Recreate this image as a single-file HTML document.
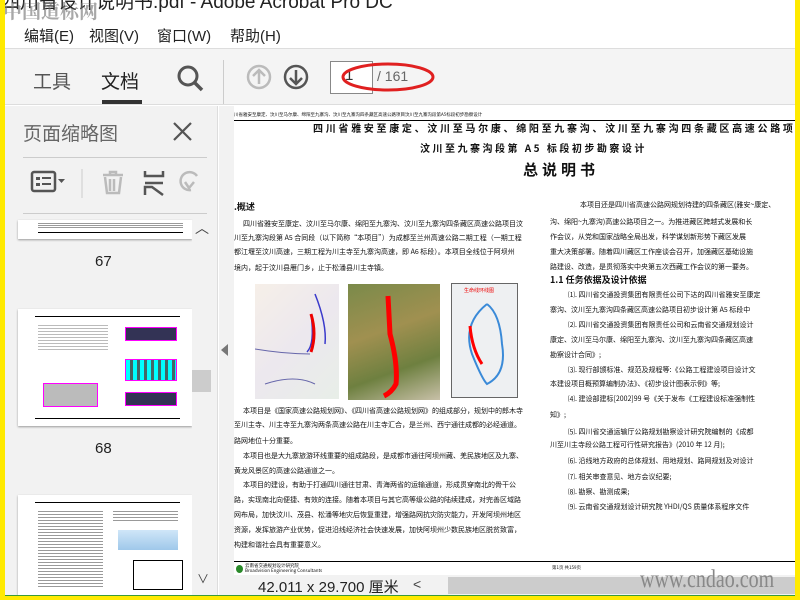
<!DOCTYPE html>
<html><head><meta charset="utf-8"><style>
*{margin:0;padding:0;box-sizing:border-box}
body{width:800px;height:600px;overflow:hidden;background:#ffea00;font-family:"Liberation Sans","Noto Sans CJK SC",sans-serif;position:relative}
.a{position:absolute}
.nw{white-space:nowrap}
.t{position:absolute;white-space:nowrap;font-size:7px;line-height:10px;color:#111;font-family:"Noto Sans CJK SC",sans-serif}
.h{font-family:"Noto Sans CJK SC",sans-serif;font-weight:bold;color:#111}
</style></head><body>
<div class="a" style="left:5px;top:0;width:790px;height:595px;background:#fff;overflow:hidden">
 <div class="a nw" style="left:-4px;top:-13px;font-size:19px;color:#222">四川省设计说明书.pdf - Adobe Acrobat Pro DC</div>
 <div class="a nw" style="left:-2px;top:-3px;font-size:19px;font-weight:bold;color:rgba(110,110,110,.6);font-family:'Noto Serif CJK SC',serif">中国道标网</div>
 <div class="a nw" style="left:19px;top:25px;font-size:15px;color:#222">编辑(E)</div>
 <div class="a nw" style="left:84px;top:25px;font-size:15px;color:#222">视图(V)</div>
 <div class="a nw" style="left:152px;top:25px;font-size:15px;color:#222">窗口(W)</div>
 <div class="a nw" style="left:225px;top:25px;font-size:15px;color:#222">帮助(H)</div>
 <div class="a" style="left:0;top:48px;width:790px;height:57px;background:#f4f4f4;border-top:1px solid #ddd;border-bottom:1px solid #ddd"></div>
 <div class="a nw" style="left:28px;top:67px;font-size:19px;color:#555">工具</div>
 <div class="a nw" style="left:96px;top:67px;font-size:19px;color:#222">文档</div>
 <div class="a" style="left:97px;top:100px;width:40px;height:4px;background:#333"></div>
 <svg class="a" style="left:170px;top:64px" width="34" height="30"><circle cx="13" cy="12" r="9" fill="none" stroke="#555" stroke-width="3"/><line x1="20" y1="19" x2="27" y2="26" stroke="#555" stroke-width="3.5"/></svg>
 <div class="a" style="left:218px;top:60px;width:1px;height:44px;background:#ccc"></div>
 <svg class="a" style="left:240px;top:64px" width="70" height="28"><circle cx="14" cy="13" r="11" fill="none" stroke="#bbb" stroke-width="2.5"/><path d="M14 20V7M8 12l6-6 6 6" fill="none" stroke="#bbb" stroke-width="2.5"/><circle cx="51" cy="13" r="11" fill="none" stroke="#555" stroke-width="2.5"/><path d="M51 6v13M45 14l6 6 6-6" fill="none" stroke="#555" stroke-width="2.5"/></svg>
 <div class="a" style="left:325px;top:61px;width:43px;height:33px;border:1px solid #888;background:#fff"></div>
 <div class="a nw" style="left:340px;top:67px;font-size:15px;color:#333">1</div>
 <div class="a nw" style="left:372px;top:68px;font-size:14px;color:#666">/ 161</div>
 <svg class="a" style="left:335px;top:58px" width="100" height="38"><ellipse cx="48" cy="19" rx="45" ry="13" fill="none" stroke="#e02020" stroke-width="3"/></svg>
 <div class="a" style="left:0;top:106px;width:213px;height:489px;background:#f2f2f2;border-right:1px solid #ddd"></div>
 <div class="a nw" style="left:18px;top:119px;font-size:19px;color:#666">页面缩略图</div>
 <svg class="a" style="left:166px;top:120px" width="24" height="24"><path d="M3 3l17 17M20 3L3 20" stroke="#555" stroke-width="2.2"/></svg>
 <div class="a" style="left:18px;top:157px;width:184px;height:1px;background:#ccc"></div>
 <svg class="a" style="left:20px;top:168px" width="180" height="30"><rect x="7" y="4" width="23" height="19" rx="2" fill="none" stroke="#555" stroke-width="2.5"/><rect x="11" y="9" width="4" height="3" fill="#555"/><rect x="11" y="15" width="4" height="3" fill="#555"/><rect x="17" y="9" width="9" height="2" fill="#555"/><rect x="17" y="15" width="9" height="2" fill="#555"/><path d="M33 11h7l-3.5 4z" fill="#555"/><line x1="57" y1="1" x2="57" y2="30" stroke="#ccc"/><path d="M78 7h20M85 7V4h6v3M80 9l2 16h12l2-16M85 11v12M89 11v12" fill="none" stroke="#bbb" stroke-width="2.5"/><path d="M120 3v5h18V3M120 15h18M120 27v-8h7l11 8" fill="none" stroke="#555" stroke-width="2.5"/><path d="M172 8a9 9 0 1 0 -6 14M160 14l4 6 5-6" fill="none" stroke="#bbb" stroke-width="2.5"/></svg>
 <div class="a" style="left:18px;top:213px;width:184px;height:1px;background:#ccc"></div>
 <div class="a" style="left:13px;top:220px;width:174px;height:19px;background:#fff;box-shadow:0 1px 2px #999"><div class="a" style="left:20px;top:2px;width:145px;height:6px;background:repeating-linear-gradient(#fff 0 1px,#999 1px 2px)"></div><div class="a" style="left:20px;top:12px;width:145px;height:1px;background:#000"></div></div>
 <div class="a nw" style="left:90px;top:253px;font-size:15px;color:#222">67</div>
 <div class="a" style="left:13px;top:309px;width:174px;height:117px;background:#fff;box-shadow:0 1px 2px #999;overflow:hidden">
  <div class="a" style="left:17px;top:7px;width:145px;height:1px;background:#000"></div>
  <div class="a" style="left:17px;top:109px;width:145px;height:1px;background:#000"></div>
  <div class="a" style="left:20px;top:14px;width:70px;height:28px;background:repeating-linear-gradient(#fff 0 2px,#bbb 2px 3px)"></div>
  <div class="a" style="left:25px;top:74px;width:55px;height:24px;border:1px solid #f0f;background:#bbb"></div>
  <div class="a" style="left:107px;top:18px;width:52px;height:14px;border:1px solid #f0f;background:#335"></div>
  <div class="a" style="left:107px;top:50px;width:52px;height:22px;border:1px solid #f0f;background:repeating-linear-gradient(90deg,#0ff 0 4px,#466 4px 7px)"></div>
  <div class="a" style="left:107px;top:83px;width:52px;height:14px;border:1px solid #f0f;background:#335"></div>
 </div>
 <div class="a nw" style="left:90px;top:440px;font-size:15px;color:#222">68</div>
 <div class="a" style="left:13px;top:495px;width:174px;height:100px;background:#fff;box-shadow:0 1px 2px #999;overflow:hidden">
  <div class="a" style="left:17px;top:7px;width:145px;height:1px;background:#000"></div>
  <div class="a" style="left:20px;top:14px;width:65px;height:80px;background:repeating-linear-gradient(#fff 0 2px,#999 2px 3px)"></div>
  <div class="a" style="left:95px;top:14px;width:65px;height:12px;background:repeating-linear-gradient(#fff 0 2px,#999 2px 3px)"></div>
  <div class="a" style="left:100px;top:35px;width:60px;height:20px;background:linear-gradient(#cfe6f8,#9fc8ea)"></div>
  <div class="a" style="left:115px;top:65px;width:50px;height:30px;border:1px solid #000"></div>
 </div>
 <div class="a" style="left:187px;top:220px;width:20px;height:375px;background:#f2f2f2"></div>
 <div class="a nw" style="left:190px;top:218px;font-size:14px;color:#444">︿</div>
 <div class="a" style="left:187px;top:370px;width:19px;height:22px;background:#ccc"></div>
 <div class="a nw" style="left:192px;top:570px;font-size:12px;color:#444">∨</div>
 <div class="a" style="left:214px;top:106px;width:15px;height:470px;background:#f2f2f2"></div>
 <svg class="a" style="left:215px;top:343px" width="10" height="14"><path d="M8 1L1 7l7 6z" fill="#777"/></svg>
 <div class="a" style="left:229px;top:106px;width:561px;height:469px;background:#fff;overflow:hidden">
  <div class="t" style="left:0;top:6px;font-size:4.5px;line-height:6px">川省雅安至康定、汶川至马尔康、绵阳至九寨沟、汶川至九寨沟四条藏区高速公路项目汶川至九寨沟段第A5标段初步勘察设计</div>
  <div class="a" style="left:0;top:14px;width:561px;height:1px;background:#000"></div>
  <div class="t h" style="left:79px;top:15px;font-size:10px;line-height:14px;letter-spacing:2.7px">四川省雅安至康定、汶川至马尔康、绵阳至九寨沟、汶川至九寨沟四条藏区高速公路项</div>
  <div class="t h" style="left:186px;top:35px;font-size:10px;line-height:14px;letter-spacing:2.5px">汶川至九寨沟段第 A5 标段初步勘察设计</div>
  <div class="t h" style="left:289px;top:54px;font-size:15px;line-height:20px;letter-spacing:4px">总说明书</div>
  <div class="t h" style="left:0;top:95px;font-size:9px;line-height:12px">.概述</div>
  <div class="t" style="left:9px;top:113px">四川省雅安至康定、汶川至马尔康、绵阳至九寨沟、汶川至九寨沟四条藏区高速公路项目汶</div>
  <div class="t" style="left:0;top:127px">川至九寨沟段第 A5 合同段（以下简称“本项目”）为成都至兰州高速公路二期工程（一期工程</div>
  <div class="t" style="left:0;top:141px">都江堰至汶川高速，三期工程为川主寺至九寨沟高速，即 A6 标段）。本项目全线位于阿坝州</div>
  <div class="t" style="left:0;top:157px">境内，起于汶川县雁门乡，止于松潘县川主寺镇。</div>
  <div class="a" style="left:21px;top:178px;width:84px;height:115px;background:linear-gradient(135deg,#f6efe8,#ece8ee 50%,#e8eee8)"><svg width="84" height="115"><path d="M60 10 Q72 40 70 60 M56 30 Q60 60 52 68" stroke="#3a3acb" stroke-width="1.5" fill="none"/><path d="M56 30 Q62 50 56 68" stroke="#e00" stroke-width="3" fill="none"/><path d="M0 65 Q30 70 55 70 M10 100 Q40 90 60 100" stroke="#66a" fill="none"/></svg></div>
  <div class="a" style="left:114px;top:178px;width:92px;height:116px;background:linear-gradient(160deg,#7a8a4a,#a09050 40%,#6e8040 70%,#c8c0a8)"><svg width="92" height="116"><path d="M40 12 L42 50 Q50 80 48 100 Q44 108 36 112" stroke="#f00" stroke-width="5" fill="none"/></svg></div>
  <div class="a" style="left:217px;top:177px;width:67px;height:115px;border:1px solid #666;background:#eef0f2"><div class="t" style="left:12px;top:2px;font-size:5px;color:#e00">生命线环线图</div><svg width="67" height="112"><path d="M35 20 Q10 40 20 70 Q30 95 35 100 Q55 90 50 60 Q48 30 35 20" stroke="#3a8ad8" stroke-width="2" fill="none"/><path d="M18 42 Q20 65 30 80" stroke="#f00" stroke-width="3" fill="none"/></svg></div>
  <div class="t" style="left:9px;top:300px">本项目是《国家高速公路规划网》、《四川省高速公路规划网》的组成部分，规划中的郎木寺</div>
  <div class="t" style="left:0;top:314px">至川主寺、川主寺至九寨沟两条高速公路在川主寺汇合，是兰州、西宁通往成都的必经通道。</div>
  <div class="t" style="left:0;top:330px">路网地位十分重要。</div>
  <div class="t" style="left:9px;top:345px">本项目也是大九寨旅游环线重要的组成路段，是成都市通往阿坝州藏、羌民族地区及九寨、</div>
  <div class="t" style="left:0;top:360px">黄龙风景区的高速公路通道之一。</div>
  <div class="t" style="left:9px;top:374px">本项目的建设，有助于打通四川通往甘肃、青海两省的运输通道，形成贯穿南北的骨干公</div>
  <div class="t" style="left:0;top:389px">路，实现南北向便捷、有效的连接。随着本项目与其它高等级公路的陆续建成，对完善区域路</div>
  <div class="t" style="left:0;top:404px">网布局，加快汶川、茂县、松潘等地灾后恢复重建，增强路网抗灾防灾能力，开发阿坝州地区</div>
  <div class="t" style="left:0;top:419px">资源，发挥旅游产业优势，促进沿线经济社会快速发展，加快阿坝州少数民族地区脱贫致富，</div>
  <div class="t" style="left:0;top:434px">构建和谐社会具有重要意义。</div>
  <div class="t" style="left:346px;top:94px">本项目还是四川省高速公路网规划待建的四条藏区(雅安~康定、</div>
  <div class="t" style="left:316px;top:111px">沟、绵阳~九寨沟)高速公路项目之一。为推进藏区跨越式发展和长</div>
  <div class="t" style="left:316px;top:126px">作会议，从党和国家战略全局出发，科学谋划新形势下藏区发展</div>
  <div class="t" style="left:316px;top:141px">重大决策部署。随着四川藏区工作座谈会召开，加强藏区基础设施</div>
  <div class="t" style="left:316px;top:156px">路建设、改造，是贯彻落实中央第五次西藏工作会议的第一要务。</div>
  <div class="t h" style="left:316px;top:168px;font-size:9px;line-height:12px">1.1 任务依据及设计依据</div>
  <div class="t" style="left:334px;top:184px">⑴. 四川省交通投资集团有限责任公司下达的四川省雅安至康定</div>
  <div class="t" style="left:316px;top:199px">寨沟、汶川至九寨沟四条藏区高速公路项目初步设计第 A5 标段中</div>
  <div class="t" style="left:334px;top:214px">⑵. 四川省交通投资集团有限责任公司和云南省交通规划设计</div>
  <div class="t" style="left:316px;top:229px">康定、汶川至马尔康、绵阳至九寨沟、汶川至九寨沟四条藏区高速</div>
  <div class="t" style="left:316px;top:244px">勘察设计合同》;</div>
  <div class="t" style="left:334px;top:259px">⑶. 现行部颁标准、规范及规程等:《公路工程建设项目设计文</div>
  <div class="t" style="left:316px;top:273px">本建设项目概预算编制办法》、《初步设计图表示例》等;</div>
  <div class="t" style="left:334px;top:288px">⑷. 建设部建标[2002]99 号《关于发布《工程建设标准强制性</div>
  <div class="t" style="left:316px;top:304px">知》;</div>
  <div class="t" style="left:334px;top:321px">⑸. 四川省交通运输厅公路规划勘察设计研究院编制的《成都</div>
  <div class="t" style="left:316px;top:334px">川至川主寺段公路工程可行性研究报告》(2010 年 12 月);</div>
  <div class="t" style="left:334px;top:350px">⑹. 沿线地方政府的总体规划、用地规划、路网规划及对设计</div>
  <div class="t" style="left:334px;top:366px">⑺. 相关审查意见、地方会议纪要;</div>
  <div class="t" style="left:334px;top:381px">⑻. 勘察、勘测成果;</div>
  <div class="t" style="left:334px;top:396px">⑼. 云南省交通规划设计研究院 YHDI/QS 质量体系程序文件</div>
  <div class="a" style="left:0;top:455px;width:561px;height:1px;background:#000"></div>
  <div class="a" style="left:2px;top:459px;width:7px;height:8px;border-radius:50%;background:#2a8a2a"></div>
  <div class="t" style="left:11px;top:458px;font-size:4.5px;line-height:5px">云南省交通规划设计研究院<br>Broadvision Engineering Consultants</div>
  <div class="t" style="left:318px;top:459px;font-size:4.5px;line-height:6px">第1页 共159页</div>
 </div>
 <div class="a" style="left:214px;top:575px;width:576px;height:20px;background:#f2f2f2"></div>
 <div class="a nw" style="left:253px;top:576px;font-size:15px;color:#222">42.011 x 29.700 厘米</div>
 <div class="a nw" style="left:408px;top:576px;font-size:14px;color:#444">&lt;</div>
 <div class="a" style="left:443px;top:577px;width:347px;height:17px;background:#ccc"></div>
 <div class="a nw" style="left:635px;top:566px;font-size:25px;color:#888;font-family:'Liberation Serif',serif;transform:scaleX(.8);transform-origin:left">www.cndao.com</div>
</div>
<div class="a" style="left:5px;top:595px;width:790px;height:1px;background:#3a9a3a"></div>
</body></html>
